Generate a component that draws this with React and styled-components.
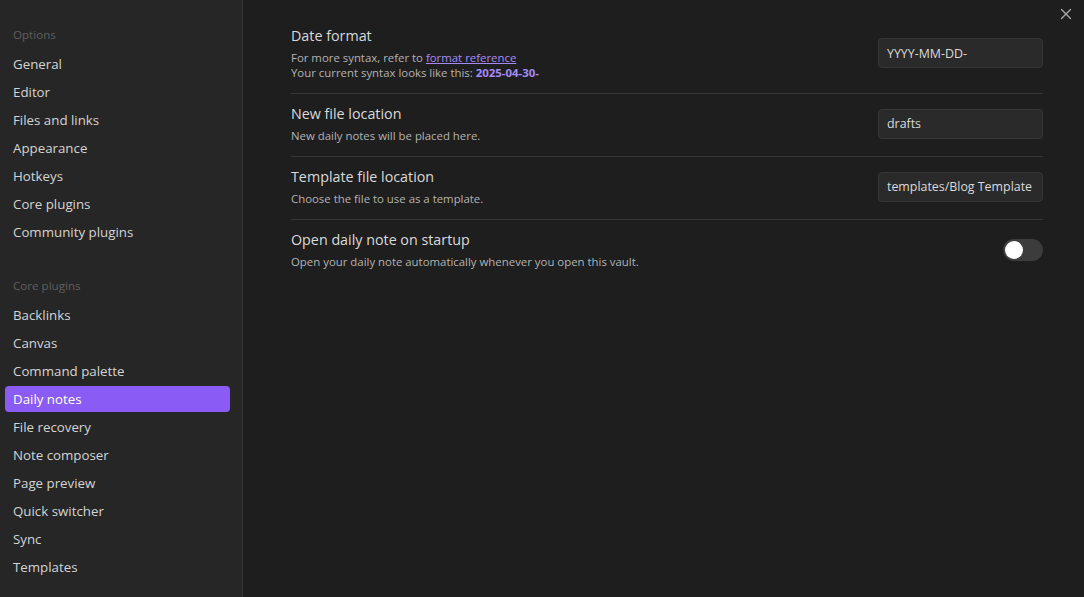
import React, { useState } from "react";
import styled, { createGlobalStyle } from "styled-components";
import { X } from "lucide-react";

const GlobalStyle = createGlobalStyle`
  html, body {
    margin: 0;
    padding: 0;
    background: #1e1e1e;
  }
  body {
    font-family: "Open Sans", "Noto Sans", sans-serif;
    color: #dadada;
  }
  * {
    box-sizing: border-box;
  }
`;

const Modal = styled.div`
  position: relative;
  display: flex;
  width: 1084px;
  height: 597px;
  background: #1e1e1e;
  overflow: hidden;
`;

const Sidebar = styled.nav`
  width: 243px;
  flex-shrink: 0;
  background: #262626;
  border-right: 1px solid #363636;
  padding: 24px 12px 0 5px;
`;

const NavGroup = styled.div`
  display: flex;
  flex-direction: column;
  gap: 2px;
  margin-bottom: 30px;
`;

const NavHeader = styled.div`
  height: 22px;
  line-height: 22px;
  padding-left: 8px;
  margin-bottom: 3px;
  font-size: 11.6px;
  color: #5f5f5f;
`;

const NavItem = styled.div`
  height: 26px;
  line-height: 26px;
  padding: 0 8px;
  border-radius: 4px;
  font-size: 13.3px;
  color: ${(p) => (p.$active ? "#ffffff" : "#d4d4d4")};
  background: ${(p) => (p.$active ? "#8a5cf5" : "transparent")};
  cursor: pointer;
`;

const Content = styled.main`
  flex: 1;
  padding: 16px 41px 0 48px;
`;

const SettingRow = styled.div`
  display: flex;
  align-items: center;
  justify-content: space-between;
  padding: 10px 0 13px;
  border-top: ${(p) => (p.$first ? "none" : "1px solid #363636")};
`;

const SettingInfo = styled.div`
  display: flex;
  flex-direction: column;
`;

const SettingName = styled.div`
  font-size: 14.3px;
  line-height: 20px;
  color: #dadada;
`;

const SettingDesc = styled.div`
  margin-top: 4px;
  font-size: 11.4px;
  line-height: 15px;
  color: #b3b3b3;
`;

const Link = styled.a`
  color: #a68af9;
  text-decoration: underline;
  cursor: pointer;
`;

const Sample = styled.span`
  color: #a68af9;
  font-weight: 700;
`;

const TextInput = styled.input`
  width: 165px;
  height: 30px;
  padding: 0 8px;
  background: #2a2a2a;
  border: 1px solid #363636;
  border-radius: 4px;
  color: #dadada;
  font-family: inherit;
  font-size: 12.4px;
  outline: none;
`;

const Toggle = styled.div`
  position: relative;
  width: 40px;
  height: 22px;
  border-radius: 11px;
  background: ${(p) => (p.$on ? "#8a5cf5" : "#3c3c3c")};
  cursor: pointer;
  flex-shrink: 0;
`;

const Knob = styled.div`
  position: absolute;
  top: 2px;
  left: ${(p) => (p.$on ? "20px" : "2px")};
  width: 18px;
  height: 18px;
  border-radius: 50%;
  background: #ffffff;
`;

const CloseButton = styled.div`
  position: absolute;
  top: 5px;
  right: 9px;
  width: 18px;
  height: 18px;
  display: flex;
  align-items: center;
  justify-content: center;
  color: #a8a8a8;
  cursor: pointer;
`;

const options = [
  "General",
  "Editor",
  "Files and links",
  "Appearance",
  "Hotkeys",
  "Core plugins",
  "Community plugins",
];

const corePlugins = [
  "Backlinks",
  "Canvas",
  "Command palette",
  "Daily notes",
  "File recovery",
  "Note composer",
  "Page preview",
  "Quick switcher",
  "Sync",
  "Templates",
];

const App = () => {
  const [active, setActive] = useState("Daily notes");
  const [startup, setStartup] = useState(false);

  return (
    <Modal>
      <GlobalStyle />
      <Sidebar>
        <NavGroup>
          <NavHeader>Options</NavHeader>
          {options.map((o) => (
            <NavItem key={o} $active={active === o} onClick={() => setActive(o)}>
              {o}
            </NavItem>
          ))}
        </NavGroup>
        <NavGroup>
          <NavHeader>Core plugins</NavHeader>
          {corePlugins.map((o) => (
            <NavItem key={o} $active={active === o} onClick={() => setActive(o)}>
              {o}
            </NavItem>
          ))}
        </NavGroup>
      </Sidebar>

      <Content>
        <SettingRow $first>
          <SettingInfo>
            <SettingName>Date format</SettingName>
            <SettingDesc>
              For more syntax, refer to <Link>format reference</Link>
              <br />
              Your current syntax looks like this: <Sample>2025-04-30-</Sample>
            </SettingDesc>
          </SettingInfo>
          <TextInput defaultValue="YYYY-MM-DD-" />
        </SettingRow>
        <SettingRow>
          <SettingInfo>
            <SettingName>New file location</SettingName>
            <SettingDesc>New daily notes will be placed here.</SettingDesc>
          </SettingInfo>
          <TextInput defaultValue="drafts" />
        </SettingRow>
        <SettingRow>
          <SettingInfo>
            <SettingName>Template file location</SettingName>
            <SettingDesc>Choose the file to use as a template.</SettingDesc>
          </SettingInfo>
          <TextInput defaultValue="templates/Blog Template" />
        </SettingRow>
        <SettingRow>
          <SettingInfo>
            <SettingName>Open daily note on startup</SettingName>
            <SettingDesc>Open your daily note automatically whenever you open this vault.</SettingDesc>
          </SettingInfo>
          <Toggle $on={startup} onClick={() => setStartup(!startup)}>
            <Knob $on={startup} />
          </Toggle>
        </SettingRow>
      </Content>

      <CloseButton>
        <X size={18} strokeWidth={1.8} />
      </CloseButton>
    </Modal>
  );
};

export default App;
